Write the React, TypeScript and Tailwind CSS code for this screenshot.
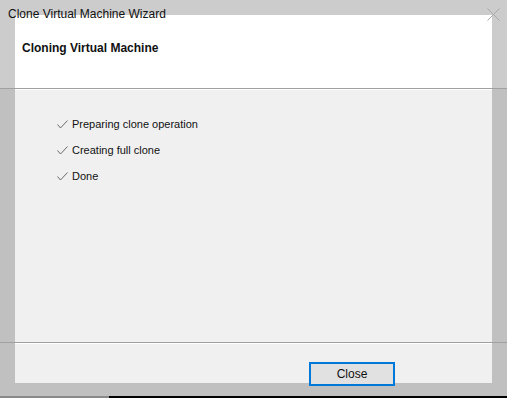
import React from 'react';

const steps = ['Preparing clone operation', 'Creating full clone', 'Done'];

const Check: React.FC = () => (
  <svg width="11" height="9" viewBox="0 0 11 9" className="shrink-0">
    <polyline points="0.5,4.5 3.5,8 10.5,0.5" fill="none" stroke="#6a6a6a" strokeWidth="1" />
  </svg>
);

const App: React.FC = () => {
  return (
    <div className="relative w-[507px] h-[398px] overflow-hidden bg-[#c0c0c0] font-['Liberation_Sans',sans-serif] text-[12px] text-[#111]">
      {/* title text and close glyph sit over the dialog edge */}
      <div className="absolute left-[8px] top-[6px] z-10 leading-[16px]">Clone Virtual Machine Wizard</div>
      <svg className="absolute right-[7px] top-[8px] z-10" width="13" height="13" viewBox="0 0 13 13">
        <path d="M0.5 0.5 L12.5 12.5 M12.5 0.5 L0.5 12.5" stroke="#a8a8a8" strokeWidth="1" />
      </svg>

      <div className="h-[88px] bg-[#cccccc] pl-[15px] pr-[15px] pt-[15px]">
        <div className="h-full bg-white pl-[7px] pt-[25px]">
          <div className="font-bold text-[12px] leading-[16px]">Cloning Virtual Machine</div>
        </div>
      </div>

      <div className="h-px bg-[#a0a0a0]" />

      <div className="mx-[15px] h-[253px] border-t border-white bg-[#f0f0f0] pl-[42px] pt-[26px]">
        <ul className="flex flex-col gap-[10px] text-[11px]">
          {steps.map(s => (
            <li key={s} className="flex items-center gap-[4px] h-[16px] leading-[16px]">
              <Check />
              <span>{s}</span>
            </li>
          ))}
        </ul>
      </div>

      <div className="h-px bg-[#a0a0a0]" />

      <div className="mx-[15px] h-[40px] border-t border-white bg-[#f0f0f0] flex justify-end pr-[97px] pt-[18px]">
        <button className="w-[86px] h-[24px] shrink-0 border-2 border-[#0078d7] bg-[#e1e1e1] text-[12px] leading-[18px] text-[#111]">
          Close
        </button>
      </div>

      <div className="h-[13px]" />

      <div className="flex h-[2px]">
        <div className="w-[109px] bg-[#8a8a8a]" />
        <div className="flex-1 bg-black" />
      </div>
    </div>
  );
};

export default App;
